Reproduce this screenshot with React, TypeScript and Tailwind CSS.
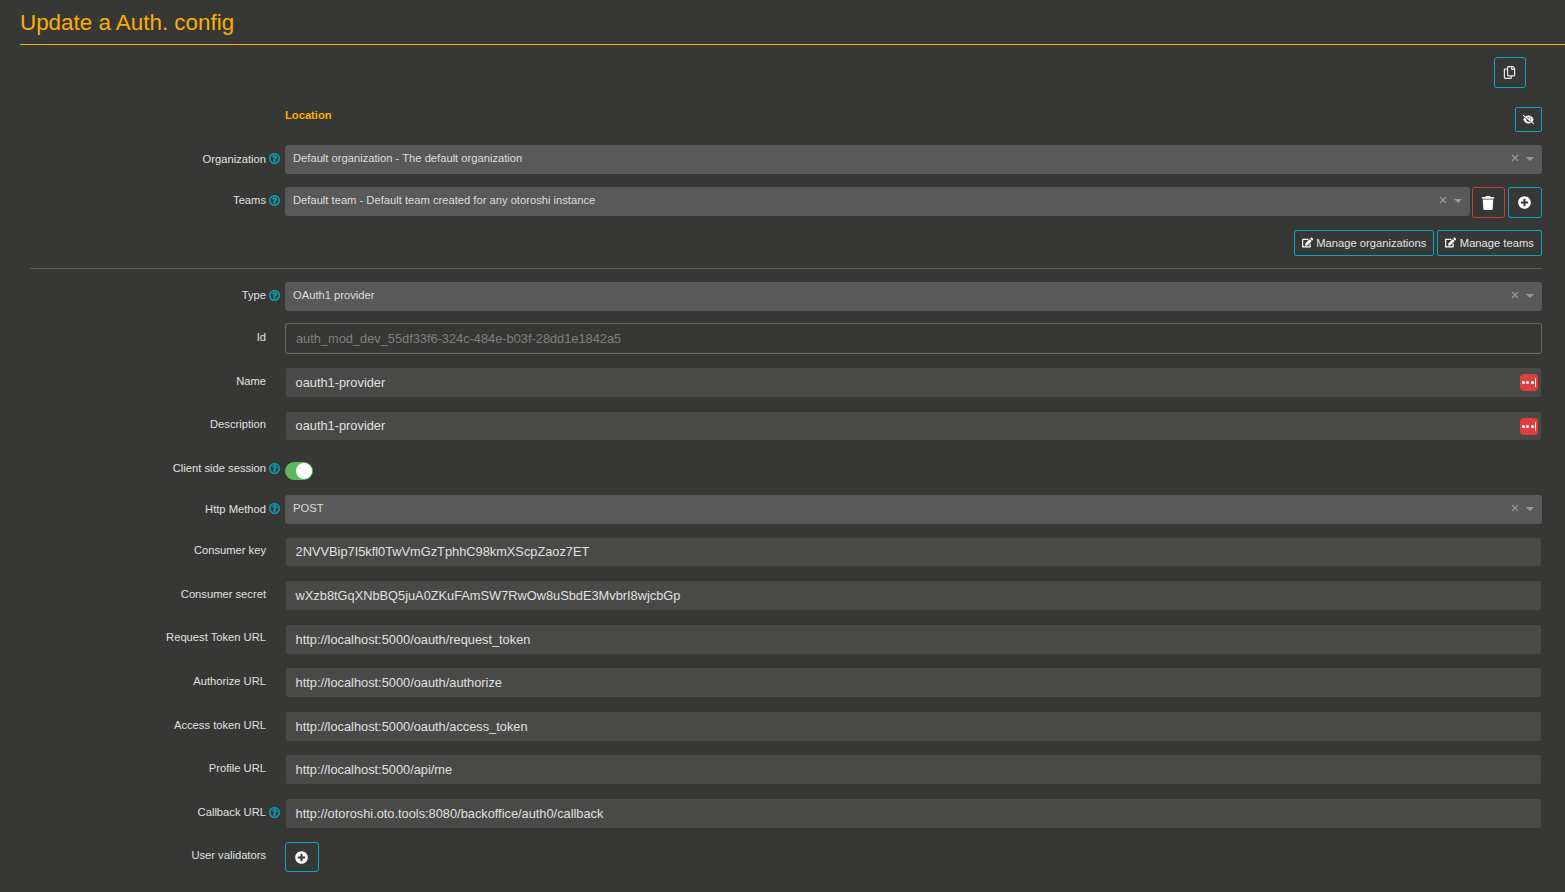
import { FC, ReactNode } from 'react';
import { FaEdit, FaPlusCircle, FaRegCopy, FaRegQuestionCircle, FaTrash } from 'react-icons/fa';
import { FaEyeSlash } from 'react-icons/fa6';

const Row: FC<{
    label: string;
    help?: boolean;
    helpTop?: string;
    className?: string;
    labelTop?: string;
    children: ReactNode;
}> = ({ label, help, helpTop = 'top-[8px]', className, labelTop = 'pt-[6px]', children }) => (
    <div className={`flex ${className || ''}`}>
        <div className="relative w-[285px] shrink-0">
            <div className={`pr-[19px] text-right text-[11.2px] leading-[16px] text-[#e0e0e0] ${labelTop}`}>
                {label}
            </div>
            {help && (
                <FaRegQuestionCircle
                    className={`absolute left-[269px] stroke-current stroke-[24] text-[11px] text-[#08a7c0] ${helpTop}`}
                />
            )}
        </div>
        <div className="flex min-w-0 flex-1 gap-[3px]">{children}</div>
    </div>
);

const Select: FC<{ value: string }> = ({ value }) => (
    <div className="flex h-[29px] min-w-0 flex-1 items-start justify-between rounded-[3px] bg-[#595959] pl-2 pr-[8px] pt-[5px] text-[11.2px] leading-[16px] text-[#dddddd]">
        <span>{value}</span>
        <span className="flex items-center gap-[7px] pt-[4px]">
            <svg width="8" height="8" viewBox="0 0 8 8" className="stroke-[#999999]">
                <path d="M1 1 7 7M7 1 1 7" strokeWidth="1.2" />
            </svg>
            <span className="mt-px h-0 w-0 border-x-[4px] border-t-[4px] border-x-transparent border-t-[#999999]" />
        </span>
    </div>
);

const PassIcon: FC = () => (
    <span className="absolute right-[3px] top-[6px] flex h-[17px] w-[18px] items-center justify-center gap-[1.5px] rounded-[4px] bg-[#dc3f3d]">
        <span className="h-[3px] w-[3px] rounded-full bg-white" />
        <span className="h-[3px] w-[3px] rounded-full bg-white" />
        <span className="h-[3px] w-[3px] rounded-full bg-white" />
        <span className="h-[9px] w-px bg-white" />
    </span>
);

const TextInput: FC<{ value: string; pass?: boolean; short?: boolean }> = ({ value, pass, short }) => (
    <div
        className={`relative mx-px flex-1 rounded-[2px] bg-[#494948] pl-[9.6px] text-[12.8px] text-[#e0e0e0] ${
            short ? 'h-[28px] leading-[28px]' : 'h-[29px] leading-[29px]'
        }`}
    >
        {value}
        {pass && <PassIcon />}
    </div>
);

const App: FC = () => {
    return (
        <div className="h-[892px] w-[1565px] overflow-hidden bg-[#373735] font-['Liberation_Sans',Arial,sans-serif]">
            <div className="ml-5 h-[45px] border-b border-[#f9b000] pt-[6px] text-[22.4px] leading-[34px] text-[#f9b000]">
                Update a Auth. config
            </div>
            <div className="pr-[23px]">
                <div className="flex justify-end pr-4 pt-3">
                    <button className="flex h-[31px] w-[32px] items-center justify-center rounded-[3px] border border-[#08a7c0] pr-px text-[13px] text-[#e6e6e6]">
                        <FaRegCopy />
                    </button>
                </div>
                <div className="mt-[19px] flex h-[25px] items-start justify-between pl-[285px]">
                    <span className="pt-px text-[11.2px] font-bold leading-[14px] text-[#f9b000]">Location</span>
                    <button className="flex h-[25px] w-[27px] items-center justify-center rounded-[2px] border border-[#08a7c0] text-[11px] text-white">
                        <FaEyeSlash className="stroke-current stroke-[20]" />
                    </button>
                </div>
                <Row label="Organization" help className="mt-[13px]">
                    <Select value="Default organization - The default organization" />
                </Row>
                <Row label="Teams" help className="mt-[13px]" labelTop="pt-[5px]">
                    <div className="flex flex-1 items-start gap-[2px]">
                        <Select value="Default team - Default team created for any otoroshi instance" />
                        <div className="flex gap-[3px]">
                            <button className="flex h-[31px] w-[33px] items-center justify-center rounded-[3px] border border-[#c9403a] pr-px text-[14px] text-white">
                                <FaTrash />
                            </button>
                            <button className="flex h-[31px] w-[34px] items-center justify-center rounded-[3px] border border-[#08a7c0] pr-px text-[13px] text-white">
                                <FaPlusCircle />
                            </button>
                        </div>
                    </div>
                </Row>
                <div className="mt-[12px] flex justify-end gap-[3px]">
                    <button className="flex h-[26px] w-[140px] items-center justify-center gap-[3.5px] rounded-[2px] border border-[#08a7c0] text-[11.2px] text-[#e6e6e6]">
                        <FaEdit className="text-white" />
                        Manage organizations
                    </button>
                    <button className="flex h-[26px] w-[105px] items-center justify-center gap-[3.5px] rounded-[2px] border border-[#08a7c0] text-[11.2px] text-[#e6e6e6]">
                        <FaEdit className="text-white" />
                        Manage teams
                    </button>
                </div>
                <div className="ml-[30px] mt-3 border-t border-[#5c5c5a]" />
                <Row label="Type" help className="mt-[13px]" labelTop="pt-[5px]">
                    <Select value="OAuth1 provider" />
                </Row>
                <Row label="Id" className="mt-3" labelTop="pt-[6px]">
                    <div className="h-[31px] flex-1 rounded-[3px] border border-[#6b6b69] pl-[10px] text-[12.8px] leading-[29px] text-[#7f7f7d]">
                        auth_mod_dev_55df33f6-324c-484e-b03f-28dd1e1842a5
                    </div>
                </Row>
                <Row label="Name" className="mt-[14px]" labelTop="pt-[5px]">
                    <TextInput value="oauth1-provider" pass />
                </Row>
                <Row label="Description" className="mt-[15px]" labelTop="pt-[4px]">
                    <TextInput value="oauth1-provider" pass short />
                </Row>
                <Row label="Client side session" help helpTop="top-px" className="mt-[22px]" labelTop="-mt-[2px]">
                    <div className="relative h-[18px] w-[28px] rounded-full bg-[#5cb85c]">
                        <span className="absolute right-px top-px h-4 w-4 rounded-full bg-white" />
                    </div>
                </Row>
                <Row label="Http Method" help className="mt-[15px]">
                    <Select value="POST" />
                </Row>
                <Row label="Consumer key" className="mt-[14px]" labelTop="pt-[4px]">
                    <TextInput value="2NVVBip7I5kfl0TwVmGzTphhC98kmXScpZaoz7ET" short />
                </Row>
                <Row label="Consumer secret" className="mt-[15px]" labelTop="pt-[5px]">
                    <TextInput value="wXzb8tGqXNbBQ5juA0ZKuFAmSW7RwOw8uSbdE3MvbrI8wjcbGp" />
                </Row>
                <Row label="Request Token URL" className="mt-[15px]" labelTop="pt-[4px]">
                    <TextInput value="http://localhost:5000/oauth/request_token" />
                </Row>
                <Row label="Authorize URL" className="mt-[14px]" labelTop="pt-[5px]">
                    <TextInput value="http://localhost:5000/oauth/authorize" />
                </Row>
                <Row label="Access token URL" className="mt-[15px]" labelTop="pt-[5px]">
                    <TextInput value="http://localhost:5000/oauth/access_token" />
                </Row>
                <Row label="Profile URL" className="mt-[14px]" labelTop="pt-[5px]">
                    <TextInput value="http://localhost:5000/api/me" />
                </Row>
                <Row label="Callback URL" help className="mt-[15px]" labelTop="pt-[5px]">
                    <TextInput value="http://otoroshi.oto.tools:8080/backoffice/auth0/callback" />
                </Row>
                <Row label="User validators" className="mt-[14px]" labelTop="pt-[5px]">
                    <button className="flex h-[30px] w-[34px] items-center justify-center rounded-[3px] border border-[#08a7c0] pr-px text-[13px] text-white">
                        <FaPlusCircle />
                    </button>
                </Row>
            </div>
        </div>
    );
};

export default App;
